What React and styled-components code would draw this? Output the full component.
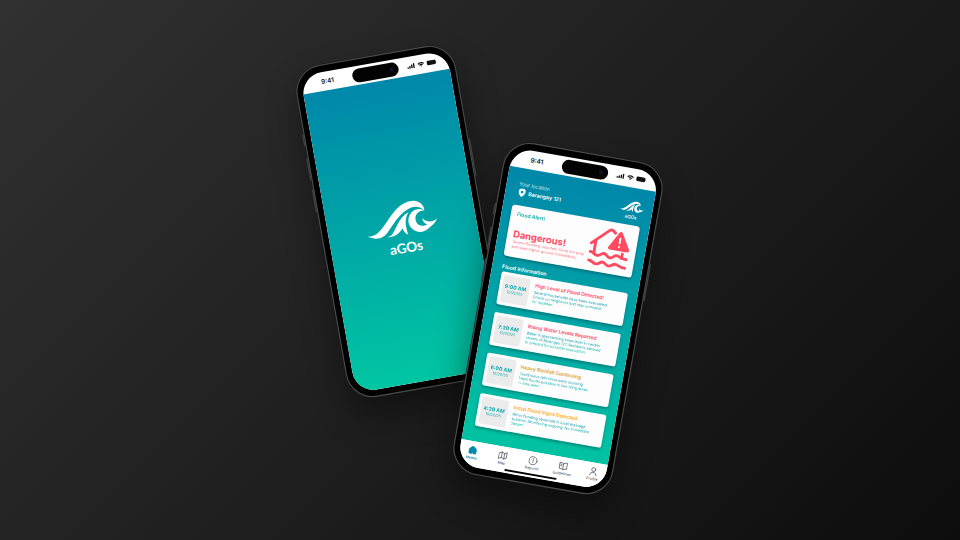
import React from "react";
import styled, { createGlobalStyle } from "styled-components";

const GlobalStyle = createGlobalStyle`
  * { box-sizing: border-box; }
  body { margin: 0; background: #1d1d1d; font-family: "Inter", sans-serif; }
`;

const Stage = styled.main`
  position: relative;
  width: 960px;
  height: 540px;
  overflow: hidden;
  background: linear-gradient(135deg, #313131 0%, #1f1f1f 50%, #0d0d0d 100%);
`;

const Phone = styled.section`
  position: absolute;
  left: ${(p) => p.$cx - 214}px;
  top: ${(p) => p.$cy - 445.5}px;
  width: 428px;
  height: 891px;
  padding: 16.5px 14.5px;
  border: 3px solid #4b4d4d;
  border-radius: 72px;
  background: #000;
  transform: rotate(${(p) => p.$tilt}deg) scale(0.378);
  box-shadow: 0 0 0 1.5px #191a1a, ${(p) => p.$shadow};
`;

const SideKey = styled.span`
  position: absolute;
  ${(p) => (p.$right ? "right" : "left")}: -7px;
  top: ${(p) => p.$top}px;
  width: 4px;
  height: ${(p) => p.$size}px;
  border-radius: 2px;
  background: #3d3f41;
`;

const Screen = styled.div`
  display: flex;
  flex-direction: column;
  width: 393px;
  height: 852px;
  overflow: hidden;
  border-radius: 56px;
  background: #fff;
`;

const StatusBar = styled.header`
  display: grid;
  grid-template-columns: 136px 124px 1fr;
  align-items: center;
  flex: none;
  height: 50px;
  color: #111;
`;

const Clock = styled.time`
  padding-left: 3px;
  text-align: center;
  font-size: 17px;
  font-weight: 600;
`;

const Island = styled.div`
  display: flex;
  align-items: center;
  justify-content: flex-end;
  height: 37px;
  padding-right: 13px;
  margin-top: 2px;
  border-radius: 18.5px;
  background: #030303;
`;

const Lens = styled.span`
  width: 11px;
  height: 11px;
  border-radius: 50%;
  background: #10102c;
`;

const StatusIcons = styled.svg`
  justify-self: start;
  margin-left: 23px;
  width: 80px;
  height: 16px;
`;

const Splash = styled.div`
  display: flex;
  flex: 1;
  flex-direction: column;
  align-items: center;
  padding: 320px 0 0 7px;
  background: linear-gradient(180deg, #0088aa 0%, #00c6a2 100%);
`;

const WaveSvg = styled.svg`
  width: ${(p) => p.$width}px;
  height: ${(p) => p.$width * 0.59}px;
  fill: #fff;
`;

const BrandName = styled.span`
  color: #fff;
  font-family: "Lato", sans-serif;
  font-size: ${(p) => p.$size}px;
  font-weight: 700;
  line-height: 1.2;
`;

const SplashName = styled(BrandName)`
  margin: -10px 3px 0 0;
`;

const Feed = styled.div`
  flex: 1;
  padding: 33px 25px 0;
  background: linear-gradient(180deg, #0087aa 0%, #00c2a3 96%);
`;

const TopRow = styled.div`
  display: flex;
  justify-content: space-between;
  height: 66px;
`;

const Location = styled.div`
  padding-left: 8px;
  color: #fff;
`;

const LocationLabel = styled.div`
  padding-left: 1px;
  font-size: 13.5px;
  font-weight: 300;
  line-height: 18px;
`;

const Place = styled.div`
  display: flex;
  align-items: center;
  gap: 8px;
  margin: 2px 0 0 2px;
  font-size: 14px;
  font-weight: 600;
  line-height: 24px;
`;

const Brand = styled.div`
  display: flex;
  flex-direction: column;
  align-items: center;
  width: 64px;
  margin-right: -3px;
`;

const Alert = styled.article`
  display: flex;
  height: 137px;
  padding: 14px 15px 0 17px;
  border-radius: 8px;
  background: #fdfdfd;
  box-shadow: 0 5px 8px rgba(0, 40, 50, 0.35);
`;

const AlertCopy = styled.div`
  width: 202px;
  white-space: nowrap;
`;

const tealText = `
  color: transparent;
  background: linear-gradient(180deg, #0087aa, #00c2a3);
  background-clip: text;
`;

const AlertLabel = styled.div`
  ${tealText}
  width: max-content;
  font-size: 13.5px;
  font-weight: 600;
  line-height: 18px;
`;

const AlertLevel = styled.h1`
  margin: 28px 0 0 -1px;
  color: #ff4a60;
  font-size: 25px;
  font-weight: 700;
  line-height: 32px;
`;

const AlertText = styled.p`
  margin: -2px 0 0 1px;
  color: #ff6f80;
  font-size: 10px;
  line-height: 13px;
`;

const FloodIcon = styled.svg`
  flex: none;
  width: 106px;
  height: 106px;
  margin-top: 1px;
`;

const SectionTitle = styled.h2`
  margin: 18px 0 3px 2px;
  color: #fff;
  font-size: 14px;
  font-weight: 600;
  line-height: 21px;
`;

const ReportList = styled.div`
  display: flex;
  flex-direction: column;
  gap: 21px;
  margin: 0 1px 0 3px;
`;

const Report = styled.article`
  display: flex;
  gap: 13px;
  height: 88px;
  padding: 8px;
  border-radius: 6px;
  background: #fdfdfd;
  box-shadow: 0 5px 8px rgba(0, 40, 50, 0.35);
`;

const Stamp = styled.div`
  display: flex;
  flex: none;
  flex-direction: column;
  align-items: center;
  justify-content: center;
  width: 72px;
  border-radius: 6px;
  background: #ebebeb;
`;

const Hour = styled.div`
  ${tealText}
  font-size: 13.5px;
  font-weight: 700;
  line-height: 16px;
`;

const Day = styled.div`
  ${tealText}
  font-size: 10px;
  line-height: 13px;
`;

const ReportCopy = styled.div`
  padding-top: 6px;
  white-space: nowrap;
`;

const ReportTitle = styled.h3`
  margin: 0 0 4px 1px;
  color: ${(p) => p.$color};
  font-size: 13px;
  font-weight: 600;
  line-height: 16px;
`;

const ReportText = styled.p`
  ${tealText}
  margin: 0;
  font-size: 10px;
  line-height: 12px;
`;

const NavBar = styled.nav`
  display: grid;
  grid-template-columns: repeat(5, 81px);
  grid-template-rows: 50px 18px;
  justify-content: center;
  flex: none;
  height: 68px;
  padding-top: 11px;
  background: #fff;
`;

const NavItem = styled.div`
  display: flex;
  flex-direction: column;
  align-items: center;
  gap: 1px;
  color: ${(p) => (p.$active ? "#0087aa" : "#3d4450")};
  font-size: 10px;
  font-weight: ${(p) => (p.$active ? 700 : 400)};
  line-height: 13px;
`;

const NavGlyph = styled.svg`
  width: 25px;
  height: 25px;
  fill: none;
  stroke: currentColor;
  stroke-width: 1.7;
  stroke-linecap: round;
  stroke-linejoin: round;
`;

const HomeIndicator = styled.div`
  grid-column: 1 / -1;
  justify-self: center;
  width: 140px;
  height: 5px;
  margin-top: -3px;
  border-radius: 3px;
  background: #000;
`;

function Wave({ width }) {
  return (
    <WaveSvg $width={width} viewBox="32 45 220 130">
      <g transform="rotate(10 142 110)">
        <path d="M37 155C66 154 77 134 94 111C112 83 134 50 169 47C193 44 208 61 207 76C193 61 173 61 153 75C128 92 113 119 99 139C87 158 67 167 37 155Z" />
        <path d="M94 156C113 154 116 137 126 119C135 101 145 88 160 81C151 94 150 111 153 126C155 137 158 145 160 149C150 145 145 139 142 129C136 139 122 158 94 156Z" />
        <path d="M207 76C184 76 175 96 184 112C190 124 205 124 216 118C207 114 202 108 201 99C217 113 232 111 246 99C239 116 227 123 219 130C208 141 190 143 178 136C156 124 154 97 169 81C180 70 198 68 207 76Z" />
      </g>
    </WaveSvg>
  );
}

function PhoneStatus() {
  return (
    <StatusBar>
      <Clock>9:41</Clock>
      <Island><Lens /></Island>
      <StatusIcons viewBox="0 0 80 16" fill="#111">
        <rect x="0" y="10" width="3.6" height="4.5" rx="1" />
        <rect x="5.4" y="7.5" width="3.6" height="7" rx="1" />
        <rect x="10.8" y="4.5" width="3.6" height="10" rx="1" />
        <rect x="16.2" y="1.5" width="3.6" height="13" rx="1" />
        <path d="M28 5.5Q37 -1.5 46 5.5L43.8 7.8Q37 2.8 30.2 7.8ZM31.5 9Q37 5 42.5 9L40.3 11.2Q37 9 33.7 11.2ZM34.8 12.2Q37 10.9 39.2 12.2L37 14.6Z" />
        <rect x="53" y="2" width="24" height="12" rx="3.5" />
        <path d="M78 6q1.8 2 0 4z" />
      </StatusIcons>
    </StatusBar>
  );
}

const reports = [
  {
    hour: "9:00 AM", color: "#ff4a60", title: "High Level of Flood Detected!",
    lines: ["Several households have been evacuated.", "Check on neighbors and stay unmuted", "for updates."],
  },
  {
    hour: "7:30 AM", color: "#ff4a60", title: "Rising Water Levels Reported",
    lines: ["Water is approaching knee level in certain", "streets of Barangay 121. Residents advised", "to prepare for possible evacuation."],
  },
  {
    hour: "6:00 AM", color: "#e09a1c", title: "Heavy Rainfall Continuing",
    lines: ["Continuous rain since early morning.", "Flash floods possible in low-lying areas", "— stay alert."],
  },
  {
    hour: "4:30 AM", color: "#ffab1a", title: "Initial Flood Signs Detected",
    lines: ["Minor flooding observed in local drainage", "systems. Monitoring ongoing. No immediate", "danger."],
  },
];

const navItems = [
  {
    label: "Home",
    art: <path fill="currentColor" d="M3 11Q3 8.500 5 7L10 3Q12 1.500 14 3L19 7Q21 8.500 21 11V19Q21 21 19 21H13.500V17H10.500V21H5Q3 21 3 19Z" />,
  },
  { label: "Map", art: <path d="M2.500 7L9 3.500V17.500L2.500 21ZM9 3.500L15.500 7V21L9 17.500M15.500 7L21.500 3.500V17.500L15.500 21" /> },
  { label: "Reports", art: <><circle cx="12" cy="12" r="10.200" /><path d="M12 7V13M12 16.500V17" /></> },
  { label: "Guidelines", art: <path d="M12 6Q10 3.500 2.500 3.500V19Q10 19 12 21.500Q14 19 21.500 19V3.500Q14 3.500 12 6V21M5.500 8L8.500 8.500M5.500 12L8.500 12.500" /> },
  { label: "Profile", art: <><circle cx="12" cy="7.500" r="5" /><path d="M3.500 22Q4 14.500 12 14.500T20.500 22" /></> },
];

function SplashPhone() {
  return (
    <Phone $cx={401} $cy={221.2} $tilt={-10} $shadow="0 50px 90px rgba(0,0,0,.4)">
      <SideKey $top={170} $size={32} />
      <SideKey $top={234} $size={62} />
      <SideKey $top={318} $size={62} />
      <SideKey $right $top={258} $size={100} />
      <Screen>
        <PhoneStatus />
        <Splash>
          <Wave width={194} />
          <SplashName $size={36}>aGOs</SplashName>
        </Splash>
      </Screen>
    </Phone>
  );
}

function FeedPhone() {
  return (
    <Phone $cx={558.3} $cy={318.6} $tilt={10} $shadow="0 50px 90px rgba(0,0,0,.42)">
      <SideKey $top={170} $size={32} />
      <SideKey $top={234} $size={62} />
      <SideKey $top={318} $size={62} />
      <SideKey $right $top={258} $size={100} />
      <Screen>
        <PhoneStatus />
        <Feed>
          <TopRow>
            <Location>
              <LocationLabel>Your location</LocationLabel>
              <Place>
                <svg width="19" height="23" viewBox="0 0 19 23">
                  <path fill="#fff" fillRule="evenodd" d="M9.500 0A9.300 9.300 0 0 0 0 9.300C0 14.500 5 19 9.500 23C14 19 19 14.500 19 9.300A9.300 9.300 0 0 0 9.500 0ZM9.500 6A3.500 3.500 0 1 1 9.500 13A3.500 3.500 0 0 1 9.500 6Z" />
                </svg>
                Barangay 121
              </Place>
            </Location>
            <Brand>
              <Wave width={64} />
              <BrandName $size={12.5}>aGOs</BrandName>
            </Brand>
          </TopRow>
          <Alert>
            <AlertCopy>
              <AlertLabel>Flood Alert!</AlertLabel>
              <AlertLevel>Dangerous!</AlertLevel>
              <AlertText>
                Severe flooding reported. Avoid the area<br />
                and seek higher ground immediately.
              </AlertText>
            </AlertCopy>
            <FloodIcon viewBox="244 165 106 106" fill="none" stroke="#ff4a60" strokeWidth="7.500" strokeLinecap="round" strokeLinejoin="round">
              <path d="M248 214L291 173Q296 169 301 173L307 178M259 205V238M334 229V241" />
              <path d="M249 237C259 237 261 244 269 244S279 236 286 236S296 245 303 245S313 236 320 236S333 244 347 242" />
              <path d="M249 260C259 260 261 267 269 267S279 259 286 259S296 267 303 267S313 259 320 259S332 266 347 265" />
              <path fill="#ff4a60" strokeWidth="6" d="M323 176L347 217Q348 220 345 220H299Q296 220 297 217L320 176Q321.500 174 323 176Z" />
              <path stroke="#fff" strokeWidth="5" d="M322 190V203M322 212V212.500" />
            </FloodIcon>
          </Alert>
          <SectionTitle>Flood Information</SectionTitle>
          <ReportList>
            {reports.map((report) => (
              <Report key={report.title}>
                <Stamp>
                  <Hour>{report.hour}</Hour>
                  <Day>10/20/25</Day>
                </Stamp>
                <ReportCopy>
                  <ReportTitle $color={report.color}>{report.title}</ReportTitle>
                  <ReportText>
                    {report.lines.map((line) => (
                      <React.Fragment key={line}>{line}<br /></React.Fragment>
                    ))}
                  </ReportText>
                </ReportCopy>
              </Report>
            ))}
          </ReportList>
        </Feed>
        <NavBar>
          {navItems.map((item, i) => (
            <NavItem key={item.label} $active={i === 0}>
              <NavGlyph viewBox="0 0 24 24">{item.art}</NavGlyph>
              {item.label}
            </NavItem>
          ))}
          <HomeIndicator />
        </NavBar>
      </Screen>
    </Phone>
  );
}

export default function App() {
  return (
    <>
      <GlobalStyle />
      <Stage>
        <SplashPhone />
        <FeedPhone />
      </Stage>
    </>
  );
}
